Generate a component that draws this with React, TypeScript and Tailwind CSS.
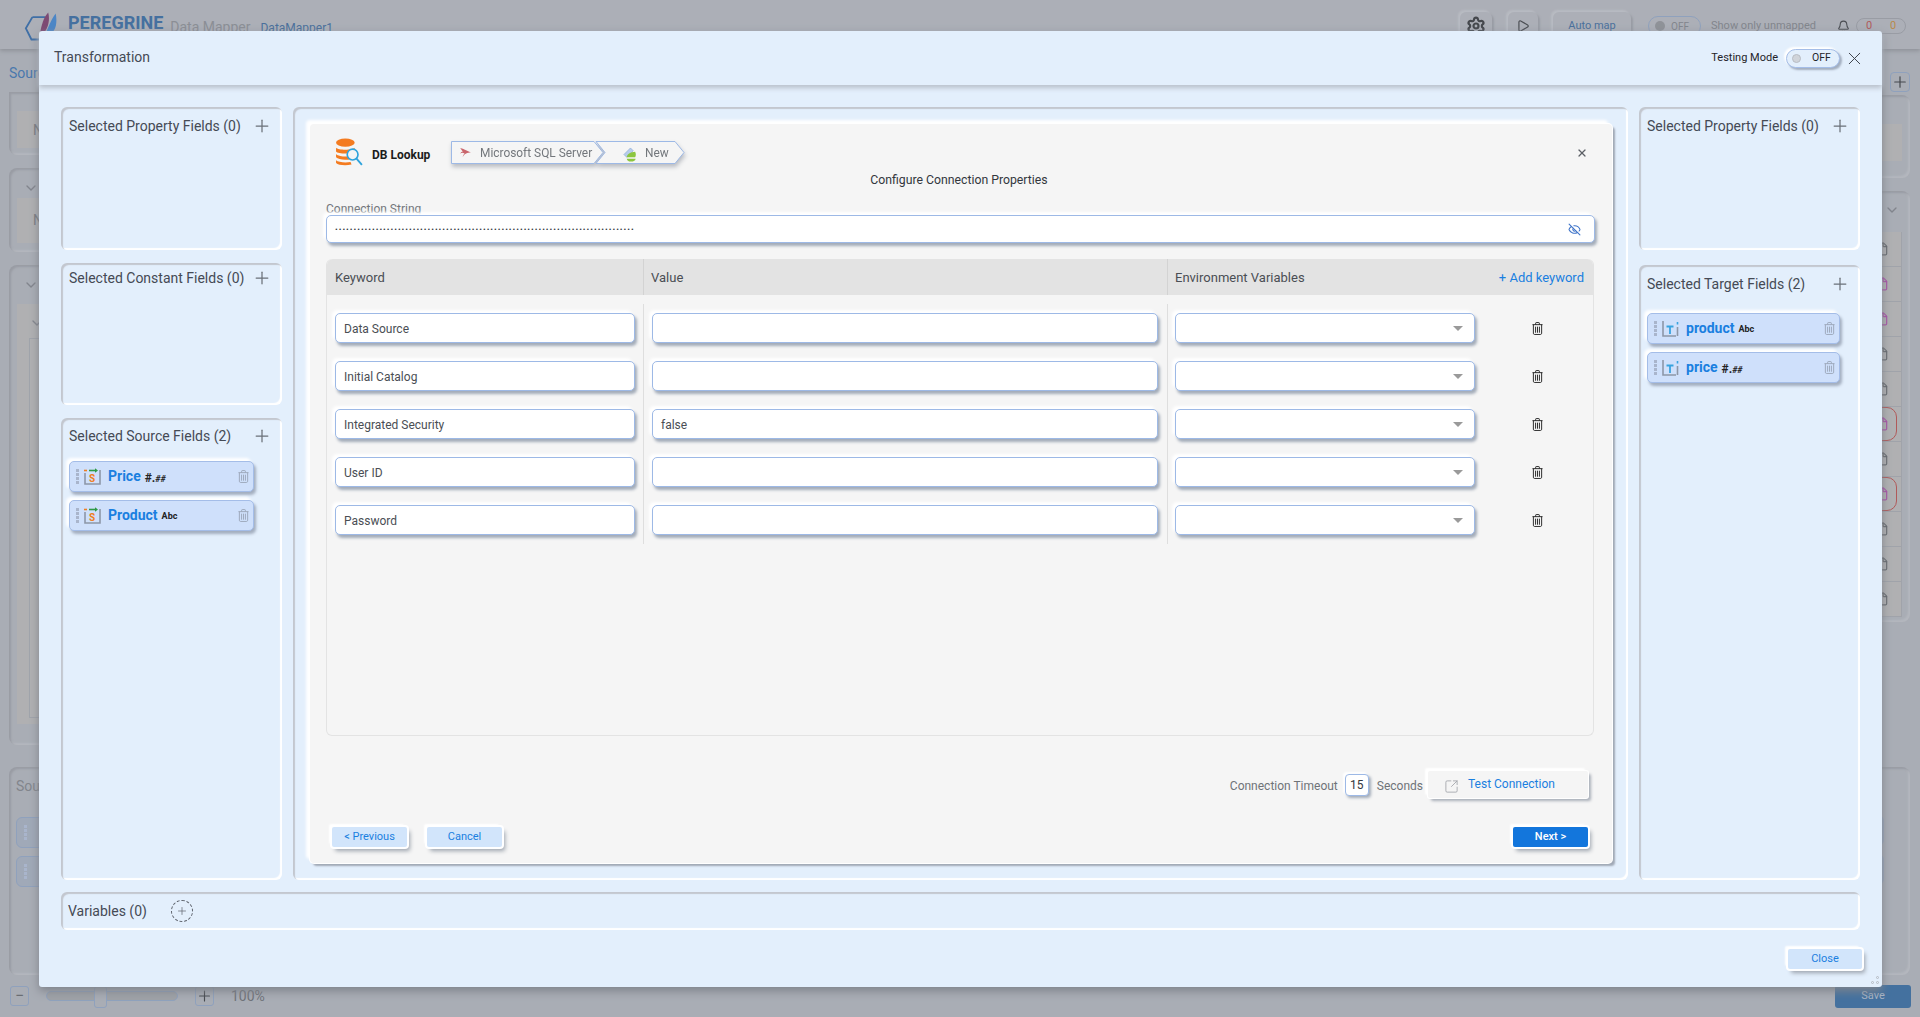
import { Bell, ChevronDown, EyeOff, File, Play, Plus, Settings, SquareArrowOutUpRight, X } from "lucide-react";

const inputBox =
  "rounded-[5px] border border-[#9db9e6] bg-white shadow-[2px_3px_3px_#a3acb9,-3px_-3px_3px_#ffffff]";
const chipBox =
  "flex items-center rounded-[5px] border border-[#a4bde8] bg-[#cfe0fb] shadow-[2px_3px_3px_#a3aebf,-3px_-3px_3px_#ffffff]";
const panelBox =
  "rounded-md bg-[#e3effc] shadow-[inset_2px_2px_1px_#c3c7cf,inset_-2px_-2px_1px_#ffffff]";
const softButton =
  "flex items-center justify-center rounded-[2px] pt-[1px] text-[11px] shadow-[0_0_0_2px_#ffffff,3px_4px_4px_#9ca3ad,-3px_-3px_2px_#ffffff]";

const rows = [
  { keyword: "Data Source", value: "" },
  { keyword: "Initial Catalog", value: "" },
  { keyword: "Integrated Security", value: "false" },
  { keyword: "User ID", value: "" },
  { keyword: "Password", value: "" },
];

const fileRows = ["g", "p", "p", "g", "g", "r", "g", "r", "g", "g", "g"];

function TrashIcon({ className }: { className: string }) {
  return (
    <svg viewBox="0 0 12 14" fill="none" stroke="currentColor" strokeWidth="1" className={className}>
      <path d="M.5 2.800h11M4 2.800V1.200c0-.4.2-.7.6-.7h2.800c.4 0 .6.3.6.7v1.600" />
      <path d="M1.500 2.800v9.400c0 .7.5 1.300 1.200 1.300h6.600c.7 0 1.200-.6 1.200-1.300V2.800" />
      <path d="M3.900 5v6.600M6 5v6.600M8.100 5v6.600" />
    </svg>
  );
}

function DbLogo() {
  return (
    <svg viewBox="0 0 28 28" className="h-[29px] w-[29px] shrink-0">
      <ellipse cx="10" cy="4.500" rx="9" ry="4" fill="#f47b20" />
      <path d="M1 9.500c2 2.500 16 2.500 18 0v3.500c-2 2.700-16 2.700-18 0z" fill="#f47b20" />
      <path d="M1 15.500c2 2.500 10 2.700 12 2.200l1 3c-5 .7-11 .2-13-2z" fill="#f47b20" />
      <path d="M1 21.500c2 2 9 2.500 14 1.700l1 2.500c-6 1.300-13 .6-15-1.500z" fill="#f47b20" />
      <circle cx="17" cy="16" r="5.200" fill="#f5f5f5" stroke="#2fa3dc" strokeWidth="1.600" />
      <path d="M20.800 20 26 26" stroke="#2fa3dc" strokeWidth="1.800" />
    </svg>
  );
}

function SourceIcon() {
  return (
    <svg viewBox="0 0 17 17" className="h-[17px] w-[17px] shrink-0">
      <path d="M1 5v11h15V2" fill="none" stroke="#8d97a8" strokeWidth="1.600" />
      <path d="M0 2.500h3" stroke="#ef7d22" strokeWidth="1.600" />
      <path d="M5 2.500h7" stroke="#2f9a46" strokeWidth="1.600" />
      <path d="M11 .3l3 2.200-3 2.200z" fill="#2f9a46" />
      <text x="5" y="13.500" fontSize="10" fontWeight="700" fill="#ef7d22" fontFamily="Roboto, sans-serif">
        S
      </text>
    </svg>
  );
}

function TargetIcon() {
  return (
    <svg viewBox="0 0 17 17" className="h-[17px] w-[17px] shrink-0">
      <path d="M1 1v15h13" fill="none" stroke="#8d97a8" strokeWidth="1.600" />
      <path d="M15.500 7v9" stroke="#8d97a8" strokeWidth="1.600" />
      <path d="M15.500 2v2.500" stroke="#38a3e0" strokeWidth="1.600" />
      <path d="M4.500 6.500h7M8 6.500V14" fill="none" stroke="#38a3e0" strokeWidth="1.800" />
    </svg>
  );
}

function Grip() {
  return (
    <div className="flex w-[3px] shrink-0 flex-col gap-[1.5px]">
      {[0, 1, 2, 3].map((i) => (
        <span key={i} className="h-[2.5px] w-[3px] bg-[#a9b5cc]" />
      ))}
    </div>
  );
}

function FieldChip({ name, type, kind, width }: { name: string; type: string; kind: "source" | "target"; width: string }) {
  return (
    <div className={`${chipBox} ${width} h-[31px] pl-[6px] pr-[4px]`}>
      <Grip />
      <div className="ml-[5px]">{kind === "source" ? <SourceIcon /> : <TargetIcon />}</div>
      <span className="ml-[7px] text-[14px] font-bold text-[#1a7fe0]">{name}</span>
      {type === "Abc" ? (
        <span className="ml-[4px] mt-[2px] text-[9px] font-bold text-[#222]">Abc</span>
      ) : (
        <span className="ml-[4px] mt-[2px] text-[12px] font-bold text-[#222]">
          #.<span className="text-[9px] italic">##</span>
        </span>
      )}
      <TrashIcon className="ml-auto h-[13px] w-[11px] text-[#9aa5b8]" />
    </div>
  );
}

function FieldsPanel({ title, className, titleTop, children }: { title: string; className: string; titleTop: string; children?: React.ReactNode }) {
  return (
    <div className={`${panelBox} ${className} pl-[8px] pr-[10px]`}>
      <div className={`flex items-center justify-between ${titleTop}`}>
        <span className="text-[14px] leading-[16px] text-[#454a55]">{title}</span>
        <Plus size={20} strokeWidth={1.5} className="text-[#6a7078]" />
      </div>
      {children}
    </div>
  );
}

function BackdropPanel({ className, children }: { className: string; children?: React.ReactNode }) {
  return <div className={`rounded-lg shadow-[inset_2px_2px_2px_#999ca4,inset_-2px_-2px_2px_#b4b7be] ${className}`}>{children}</div>;
}

function Backdrop() {
  return (
    <div className="flex h-full flex-col text-[#82858c]">
      <div className="flex h-[49px] shrink-0 items-start bg-[#acafb7] shadow-[0_2px_4px_#8f9299]">
        <div className="ml-[24px] mt-[9px] flex items-start">
          <svg viewBox="0 0 44 34" className="h-[33px] w-[41px] shrink-0">
            <path d="M9 8h14M9 8 2 20l6 12h14" fill="none" stroke="#3f6fa6" strokeWidth="2" />
            <path d="M17 26C19 16 21 8 26 3c2 8 0 16-4 21z" fill="#7d4a73" />
            <path d="M22 28c4-8 6-16 12-24 2 10 0 17-4 21l8 1c-5 3-11 4-16 2z" fill="#4c86c6" />
          </svg>
          <span className="ml-[3px] mt-[3px] text-[18px] font-bold leading-[22px] text-[#45709f]">PEREGRINE</span>
          <span className="ml-[7px] mt-[10px] text-[14px] leading-[16px] text-[#8b8e95]">Data Mapper</span>
          <span className="ml-[10px] mt-[11px] text-[12px] leading-[16px] text-[#4a6f9c]">DataMapper1</span>
        </div>
        <div className="ml-auto mr-[14px] mt-[12px] flex items-center">
          <div className="flex h-[28px] w-[32px] items-center justify-center rounded-md bg-[#acafb7] shadow-[-2px_-2px_2px_#b8bbc2,2px_2px_2px_#999ca4]">
            <Settings size={20} strokeWidth={2.6} className="text-[#45484d]" />
          </div>
          <div className="ml-[16px] flex h-[28px] w-[30px] items-center justify-center rounded-md shadow-[-2px_-2px_2px_#b8bbc2,2px_2px_2px_#999ca4]">
            <Play size={14} className="text-[#4a4d52]" />
          </div>
          <div className="ml-[15px] flex h-[28px] w-[78px] items-center justify-center rounded-md text-[11px] text-[#4a6f9c] shadow-[-2px_-2px_2px_#b8bbc2,2px_2px_2px_#999ca4]">
            Auto map
          </div>
          <div className="ml-[17px] flex h-[20px] w-[53px] items-center rounded-full border border-[#8fa1bd] pl-[6px] text-[10px]">
            <span className="h-[10px] w-[10px] rounded-full bg-[#8f9298]" />
            <span className="ml-[6px]">OFF</span>
          </div>
          <span className="ml-[10px] text-[11px]">Show only unmapped</span>
          <div className="ml-[14px] flex h-[24px] w-[76px] items-center pl-[7px]">
            <Bell size={13} className="text-[#4a4d52]" />
            <div className="ml-[6px] flex h-[16px] flex-1 items-center justify-around rounded-full border border-[#999ca4] text-[11px]">
              <span className="text-[#b05a5a]">0</span>
              <span className="text-[#b98a4a]">0</span>
            </div>
          </div>
        </div>
      </div>

      <div className="flex min-h-0 flex-1 justify-between pl-[9px] pr-[10px]">
        <div className="flex w-[500px] flex-col">
          <div className="h-[43px] pt-[16px] text-[14px] leading-[16px] text-[#4a78ad]">Sources</div>
          <BackdropPanel className="h-[63px] pl-[8px] pt-[19px] rounded-t-none">
            <div className="h-[37px] bg-[#b0b0b2] pl-[16px] pt-[9px] text-[14px] text-[#777a80]">N</div>
          </BackdropPanel>
          <BackdropPanel className="mt-[13px] h-[84px] pl-[8px] pt-[9px]">
            <div className="flex h-[21px] items-center gap-[3px] pl-[6px]">
              <ChevronDown size={16} />
              <span className="text-[14px]">C</span>
            </div>
            <div className="h-[45px] bg-[#b0b0b2] pl-[16px] pt-[12px] text-[14px] text-[#777a80]">N</div>
          </BackdropPanel>
          <BackdropPanel className="mt-[13px] h-[480px] pl-[8px] pt-[9px]">
            <div className="flex h-[21px] items-center gap-[3px] pl-[6px]">
              <ChevronDown size={16} />
              <span className="text-[14px]">C</span>
            </div>
            <div className="mt-[9px] h-[420px] bg-[#b0b0b2] pl-[12px] pt-[11px]">
              <ChevronDown size={16} />
              <div className="mt-[7px] h-[380px] border border-[#a0a3aa]" />
            </div>
          </BackdropPanel>
          <BackdropPanel className="mt-[22px] h-[208px] pl-[7px] pt-[7px]">
            <span className="text-[14px] leading-[16px]">Sou</span>
            <div className="mt-[19px] flex h-[31px] w-[200px] items-center rounded-md border border-[#8fa1bd] bg-[#a0a9b8] pl-[7px]">
              <Grip />
            </div>
            <div className="mt-[8px] flex h-[31px] w-[200px] items-center rounded-md border border-[#8fa1bd] bg-[#a0a9b8] pl-[7px]">
              <Grip />
            </div>
          </BackdropPanel>
        </div>

        <div className="flex w-[500px] flex-col items-end">
          <div className="flex h-[46px] items-end pb-[3px]">
            <div className="flex h-[20px] w-[20px] items-center justify-center rounded-[4px] border border-[#8fa1bd]">
              <Plus size={20} strokeWidth={1.6} className="text-[#45484e]" />
            </div>
          </div>
          <BackdropPanel className="h-[83px] w-full pl-[16px] pr-[8px] pt-[29px]">
            <div className="h-[37px] bg-[#b0b0b2]" />
          </BackdropPanel>
          <BackdropPanel className="mt-[13px] h-[432px] w-full pr-[8px] pt-[11px]">
            <div className="flex justify-end pr-[2px]">
              <ChevronDown size={16} />
            </div>
            <div className="mt-[14px] flex flex-col items-stretch">
              {fileRows.map((kind, i) => (
                <div key={i} className="relative flex h-[35px] items-center justify-end border border-t-0 border-[#a0a3aa] bg-[#b0b0b2] pr-[12px]">
                  {kind === "r" && <div className="absolute inset-y-0 right-[4px] w-[60px] rounded-[10px] border border-[#b05a5a]" />}
                  <File size={14} className={kind === "g" ? "text-[#66696e]" : "text-[#a850a8]"} />
                </div>
              ))}
            </div>
          </BackdropPanel>
          <BackdropPanel className="mt-[145px] h-[208px] w-full">
            <div className="ml-auto mr-[26px] mt-[48px] h-[31px] w-[100px] rounded-md bg-[#98a6bb]" />
            <div className="ml-auto mr-[26px] mt-[8px] h-[31px] w-[100px] rounded-md bg-[#98a6bb]" />
          </BackdropPanel>
        </div>
      </div>

      <div className="flex h-[42px] shrink-0 items-center justify-between pl-[10px] pr-[9px]">
        <div className="flex items-center">
          <div className="flex h-[20px] w-[19px] items-center justify-center rounded-[3px] border border-[#8fa1bd] text-[#6a6d73]">−</div>
          <div className="relative ml-[17px] h-[10px] w-[132px] rounded-full border border-[#8fa1bd] bg-[#9fa2a7]">
            <div className="absolute -top-[6px] left-[47px] h-[22px] w-[13px] rounded-[3px] border border-[#8fa1bd] bg-[#a9adb5]" />
          </div>
          <div className="ml-[17px] flex h-[20px] w-[19px] items-center justify-center rounded-[3px] border border-[#8fa1bd]">
            <Plus size={18} strokeWidth={1.6} className="text-[#45484e]" />
          </div>
          <span className="ml-[17px] text-[14px] text-[#6f7278]">100%</span>
        </div>
        <div className="flex h-[23px] w-[76px] items-center justify-center rounded-[3px] bg-[#44719f] text-[11px] text-[#a9b6c5]">Save</div>
      </div>
    </div>
  );
}

function Breadcrumb() {
  return (
    <div className="-ml-[1px] flex h-[23px] w-[234px] drop-shadow-[1px_3px_2px_#b9bcc2]">
      <div className="relative flex w-[153px] items-center pl-[9px]">
        <svg viewBox="0 0 153 23" preserveAspectRatio="none" className="absolute inset-0 h-full w-full">
          <path d="M.5.5H143l9 11-9 11H.5z" fill="#f5f5f5" stroke="#9db9e6" />
        </svg>
        <svg viewBox="0 0 12 10" className="relative h-[9px] w-[11px]">
          <path d="M0 0c4 1 8 3 12 5-4 0-7 1-9 5 0-2 1-3 2-4-2-1-3-1-5 0 1-1 2-2 3-2C2 3 1 1 0 0z" fill="#c9656c" />
        </svg>
        <span className="relative ml-[9px] text-[11.9px] leading-[14px] text-[#73777c]">Microsoft SQL Server</span>
      </div>
      <div className="relative -ml-[9px] flex w-[90px] items-center pl-[28px]">
        <svg viewBox="0 0 90 23" preserveAspectRatio="none" className="absolute inset-0 h-full w-full">
          <path d="M1 .5H80l9 11-9 11H1l9-11z" fill="#f5f5f5" stroke="#9db9e6" />
        </svg>
        <svg viewBox="0 0 15 16" className="relative mt-[4px] h-[15px] w-[14px]">
          <path d="M1 8 8 1l3 3-7 7z" fill="#b7cdeb" stroke="#7ea0d0" strokeWidth=".6" />
          <path d="M4 11c0-3 4-6 9-6 1 2 1 4 0 6z" fill="#8cc63f" />
          <path d="M4 12.500h9.500c0 2-2 3-5 3s-4-1-4.500-3z" fill="#8cc63f" />
        </svg>
        <span className="relative ml-[8px] text-[11.9px] leading-[14px] text-[#73777c]">New</span>
      </div>
    </div>
  );
}

function ConnectionCard() {
  return (
    <div className="flex h-[739px] flex-col rounded-[4px] bg-[#f5f5f5] pt-[17px] shadow-[0_0_0_1px_#ffffff,-4px_-4px_3px_#ffffff,3px_3px_2px_#a0a8b5]">
      <div className="relative flex h-[23px] items-center pl-[25px] pr-[24px]">
        <DbLogo />
        <span className="ml-[8px] mt-[4px] w-[80px] text-[12px] font-bold text-[#1c1c1c]">DB Lookup</span>
        <Breadcrumb />
        <X size={12} strokeWidth={2.4} className="ml-auto text-[#5c6066]" />
      </div>
      <div className="mt-[9px] h-[15px] pr-[4px] text-center text-[12.25px] leading-[15px] text-[#33373d]">Configure Connection Properties</div>
      <div className="ml-[16px] mt-[13px] h-[14px] overflow-hidden text-[12px] leading-[16px] text-[#73777c]">Connection String</div>
      <div className={`${inputBox} mx-[16px] flex h-[28px] w-[1269px] items-center justify-between pl-[8px] pr-[13px]`}>
        <span className="mt-[1px] text-[8px] leading-[8px] tracking-[1px] text-[#33373d]">
          {"•".repeat(81)}
        </span>
        <EyeOff size={13} className="text-[#3f74c9]" />
      </div>

      <div className="mx-[16px] mt-[16px] flex h-[477px] w-[1268px] flex-col rounded-md border border-t-0 border-[#e3e3e3]">
        <div className="grid h-[36px] grid-cols-[316px_524px_1fr] items-center rounded-t-md bg-[#e3e3e3] text-[13px] text-[#4a4e54]">
          <span className="pl-[8px] pt-[1px]">Keyword</span>
          <span className="flex h-full items-center border-l border-[#d3d3d3] pl-[7px] pt-[1px]">Value</span>
          <div className="flex h-full items-center justify-between border-l border-[#d3d3d3] pl-[7px] pr-[9px] pt-[1px]">
            <span>Environment Variables</span>
            <span className="text-[#1a7fe0]">+ Add keyword</span>
          </div>
        </div>
        <div className="pt-[9px]">
          {rows.map((row) => (
            <div key={row.keyword} className="grid h-[48px] grid-cols-[316px_524px_1fr]">
              <div className="pl-[8px] pt-[9px]">
                <div className={`${inputBox} flex h-[30px] w-[300px] items-center pl-[8px] pt-[1px] text-[12px] text-[#4a4e54]`}>{row.keyword}</div>
              </div>
              <div className="border-l border-[#dedede] pl-[8px] pt-[9px]">
                <div className={`${inputBox} flex h-[30px] w-[506px] items-center pl-[8px] pt-[1px] text-[12px] text-[#4a4e54]`}>{row.value}</div>
              </div>
              <div className="flex items-start border-l border-[#dedede] pl-[7px] pt-[9px]">
                <div className={`${inputBox} flex h-[30px] w-[300px] items-center justify-end pr-[11px]`}>
                  <span className="h-0 w-0 border-x-[5px] border-t-[5px] border-x-transparent border-t-[#9a9a9a]" />
                </div>
                <TrashIcon className="ml-[57px] mt-[9px] h-[13px] w-[11px] text-[#1e1e1e]" />
              </div>
            </div>
          ))}
        </div>
      </div>

      <div className="mr-[24px] mt-[35px] flex h-[27px] items-center justify-end text-[12px] text-[#6f7378]">
        <span className="mt-[2px]">Connection Timeout</span>
        <div className="ml-[7px] flex h-[22px] w-[24px] items-center justify-center rounded-[4px] border border-[#9db9e6] bg-white text-[12px] text-[#33373d] shadow-[2px_2px_3px_#a3acb9,-2px_-2px_2px_#ffffff]">15</div>
        <span className="ml-[8px] mt-[2px]">Seconds</span>
        <div className="ml-[5px] flex h-[27px] w-[160px] items-center rounded-[2px] bg-[#f5f5f5] pl-[16px] shadow-[0_0_0_1px_#ffffff,-3px_-3px_2px_#ffffff,3px_3px_3px_#a9afb9]">
          <SquareArrowOutUpRight size={15} strokeWidth={1.4} className="mt-[3px] text-[#a3a6ac]" />
          <span className="ml-[9px] -mt-[2px] text-[12px] text-[#1a7fe0]">Test Connection</span>
        </div>
      </div>

      <div className="mx-[22px] mt-[29px] flex h-[20px] items-center">
        <div className={`${softButton} h-[20px] w-[75px] bg-[#d2e5fb] text-[#1a7fe0]`}>&lt; Previous</div>
        <div className={`${softButton} ml-[20px] h-[20px] w-[75px] bg-[#d2e5fb] text-[#1a7fe0]`}>Cancel</div>
        <div className={`${softButton} ml-auto mr-[2px] h-[20px] w-[75px] bg-[#1376dc] font-medium text-white`}>Next &gt;</div>
      </div>
    </div>
  );
}

export default function App() {
  return (
    <div className="relative h-[1017px] w-[1920px] overflow-hidden bg-[#a9adb5] font-['Roboto',sans-serif]">
      <Backdrop />

      <div className="absolute left-[39px] top-[31px] flex h-[956px] w-[1843px] flex-col rounded-[3px] bg-[#e3effc] shadow-[0_4px_10px_#7f838b]">
        <div className="flex h-[54px] shrink-0 items-center rounded-t-[3px] pl-[15px] pr-[17px] shadow-[0_3px_5px_#b9c0cb]">
          <span className="-mt-[2px] text-[14px] text-[#454a55]">Transformation</span>
          <span className="ml-auto text-[11px] text-[#1f2328]">Testing Mode</span>
          <div className="ml-[8px] flex h-[19px] w-[54px] items-center rounded-full border border-[#a4bde8] bg-[#e3effc] pl-[5px] shadow-[2px_2px_2px_#a3aebf,-2px_-2px_2px_#ffffff]">
            <span className="h-[9px] w-[9px] rounded-full border border-[#b8bcc4] bg-[#d0d4da]" />
            <span className="ml-[11px] text-[10.5px] text-[#1f2328]">OFF</span>
          </div>
          <X size={21} strokeWidth={1.1} className="ml-[4px] text-[#3b4048]" />
        </div>

        <div className="mt-[22px] flex h-[773px] shrink-0 gap-[11px] px-[22px]">
          <div className="flex w-[221px] flex-col gap-[13px]">
            <FieldsPanel title="Selected Property Fields (0)" className="h-[143px]" titleTop="pt-[9px]" />
            <FieldsPanel title="Selected Constant Fields (0)" className="h-[142px]" titleTop="pt-[5px]" />
            <FieldsPanel title="Selected Source Fields (2)" className="min-h-0 flex-1" titleTop="pt-[8px]">
              <div className="mt-[15px] flex flex-col gap-[8px]">
                <FieldChip name="Price" type="#.##" kind="source" width="w-[185px]" />
                <FieldChip name="Product" type="Abc" kind="source" width="w-[185px]" />
              </div>
            </FieldsPanel>
          </div>

          <div className={`${panelBox} h-[773px] w-[1335px] pb-[17px] pl-[17px] pr-[16px] pt-[17px]`}>
            <ConnectionCard />
          </div>

          <div className="flex w-[221px] flex-col gap-[15px]">
            <FieldsPanel title="Selected Property Fields (0)" className="h-[143px]" titleTop="pt-[9px]" />
            <FieldsPanel title="Selected Target Fields (2)" className="min-h-0 flex-1" titleTop="pt-[9px]">
              <div className="mt-[19px] flex flex-col gap-[8px]">
                <FieldChip name="product" type="Abc" kind="target" width="w-[193px] h-[30px]" />
                <FieldChip name="price" type="#.##" kind="target" width="w-[193px] h-[30px]" />
              </div>
            </FieldsPanel>
          </div>
        </div>

        <div className={`${panelBox} mx-[22px] mt-[12px] flex h-[38px] shrink-0 items-center pl-[7px]`}>
          <span className="text-[14px] text-[#454a55]">Variables (0)</span>
          <div className="ml-[24px] flex h-[22px] w-[22px] items-center justify-center rounded-full border border-dashed border-[#5d626b]">
            <Plus size={12} strokeWidth={1.4} className="text-[#5d626b]" />
          </div>
        </div>

        <div className="relative flex flex-1 items-start justify-end pr-[20px] pt-[19px]">
          <div className={`${softButton} h-[20px] w-[74px] bg-[#d2e5fb] text-[#1a7fe0]`}>Close</div>
          <div className="absolute bottom-[3px] right-[3px] grid grid-cols-2 gap-[2px]">
            <span />
            <span className="h-[3px] w-[3px] rounded-full border border-[#b5bac2]" />
            <span className="h-[3px] w-[3px] rounded-full border border-[#b5bac2]" />
            <span className="h-[3px] w-[3px] rounded-full border border-[#b5bac2]" />
          </div>
        </div>
      </div>
    </div>
  );
}
